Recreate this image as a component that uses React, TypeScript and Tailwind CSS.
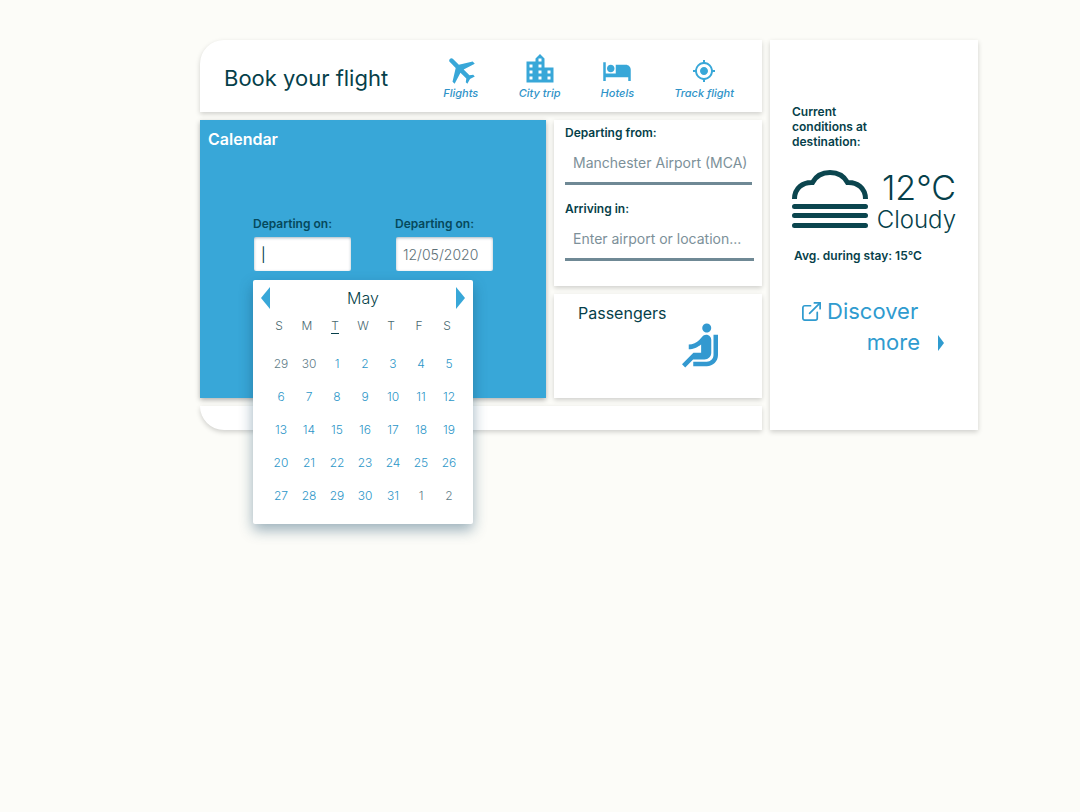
import React from "react";
import {
  MdFlight,
  MdLocationCity,
  MdHotel,
  MdGpsFixed,
  MdAirlineSeatReclineNormal,
} from "react-icons/md";
import { FiExternalLink } from "react-icons/fi";

const card = "bg-white shadow-[0_2px_5px_rgba(0,0,0,0.18)]";

const days = ["S", "M", "T", "W", "T", "F", "S"];
const weeks = [
  [29, 30, 1, 2, 3, 4, 5],
  [6, 7, 8, 9, 10, 11, 12],
  [13, 14, 15, 16, 17, 18, 19],
  [20, 21, 22, 23, 24, 25, 26],
  [27, 28, 29, 30, 31, 1, 2],
];

function isOutside(week: number, day: number) {
  return (week === 0 && day > 7) || (week === 4 && day < 7);
}

function NavItem({ icon, label }: { icon: React.ReactNode; label: string }) {
  return (
    <a href="#" className="flex flex-col items-center text-[#38a7d8]">
      <span className="flex h-8 items-center">{icon}</span>
      <span className="text-[11px] leading-4 font-medium italic whitespace-nowrap text-[#2f93c8]">{label}</span>
    </a>
  );
}

function DatePicker() {
  return (
    <div className="absolute top-[160px] left-[53px] z-10 h-[244px] w-[220px] rounded-xs bg-white shadow-[0_6px_14px_rgba(20,70,100,0.42)]">
      <div className="flex h-9 items-center justify-between px-2">
        <button type="button" aria-label="Previous month">
          <svg className="h-[22px] w-[9px] fill-[#38a7d8]" viewBox="0 0 9 22">
            <path d="M9 0v22L0 11z" />
          </svg>
        </button>
        <span className="text-base font-light text-[#063f4a]">May</span>
        <button type="button" aria-label="Next month">
          <svg className="h-[22px] w-[9px] fill-[#38a7d8]" viewBox="0 0 9 22">
            <path d="M0 0v22l9-11z" />
          </svg>
        </button>
      </div>
      <table className="ml-3 table-fixed border-collapse text-xs font-light">
        <thead>
          <tr className="h-5 text-[#47686f]">
            {days.map((d, i) => (
              <th key={i} className="w-7 p-0 text-center leading-4 font-light">
                <span className={i === 2 ? "border-b border-[#063f4a]" : ""}>{d}</span>
              </th>
            ))}
          </tr>
        </thead>
      </table>
      <table className="mt-[11px] ml-3.5 table-fixed border-collapse text-xs">
        <tbody>
          {weeks.map((week, w) => (
            <tr key={w} className="h-[33px]">
              {week.map((day, i) => (
                <td key={i} className="w-7 p-0 text-center">
                  <button
                    type="button"
                    className={
                      isOutside(w, day)
                        ? "font-light text-[#5f7d88]"
                        : "font-light text-[#2c96c8]"
                    }
                  >
                    {day}
                  </button>
                </td>
              ))}
            </tr>
          ))}
        </tbody>
      </table>
    </div>
  );
}

function DateField({ id, children }: { id: string; children: React.ReactNode }) {
  return (
    <div className="w-[98px]">
      <label htmlFor={id} className="block text-xs leading-4 font-semibold whitespace-nowrap text-[#06495c]">
        Departing on:
      </label>
      {children}
    </div>
  );
}

const dateInput =
  "mt-[5px] ml-px block h-[34px] w-[97px] rounded-xs bg-white px-[7px] text-sm shadow-[inset_0_1px_3px_rgba(0,50,80,0.35)] outline-none";

const placeInput =
  "block h-11 border-b-3 border-[#6f8995] pt-1.5 pb-1 pl-2 text-sm outline-none placeholder:text-[#7c9099]";

export default function App() {
  return (
    <div className="min-h-screen bg-[#fcfcf8] pt-10 pr-[102px] pl-[200px] font-['Inter',sans-serif] text-[#063f4a]">
      <div className="flex gap-2">
        <main className="flex min-w-0 flex-1 flex-col gap-2">
          <header className={`flex h-[72px] items-center rounded-tl-3xl pr-7 pl-6 ${card}`}>
            <h1 className="flex-1 pt-1 text-[22px] whitespace-nowrap">Book your flight</h1>
            <nav className="flex gap-10 pt-0.5">
              <NavItem icon={<MdFlight className="size-9 -rotate-45" />} label="Flights" />
              <NavItem icon={<MdLocationCity className="size-9" />} label="City trip" />
              <NavItem icon={<MdHotel className="mt-1 size-[30px]" />} label="Hotels" />
              <NavItem icon={<MdGpsFixed className="mt-1 size-6" />} label="Track flight" />
            </nav>
          </header>

          <div className="flex gap-2">
            <section className="relative min-w-0 flex-1 bg-[#38a7d8] shadow-[0_2px_5px_rgba(0,0,0,0.3)]">
              <h2 className="px-2 pt-[7px] text-base leading-6 font-semibold text-white">Calendar</h2>
              <div className="flex gap-11 pt-[65px] pl-[53px]">
                <DateField id="depart">
                  <input id="depart" placeholder="|" className={`${dateInput} placeholder:text-[#063f4a]`} />
                </DateField>
                <DateField id="return">
                  <input id="return" defaultValue="12/05/2020" className={`${dateInput} font-light text-[#5d7077]`} />
                </DateField>
              </div>
              <DatePicker />
            </section>

            <div className="flex w-[208px] flex-col gap-2">
              <section className={`h-[166px] pt-[5px] pr-2 pl-[11px] ${card}`}>
                <label htmlFor="from" className="block text-xs leading-4 font-semibold">
                  Departing from:
                </label>
                <input id="from" placeholder="Manchester Airport (MCA)" className={`w-[187px] ${placeInput}`} />
                <label htmlFor="to" className="mt-4 block text-xs leading-4 font-semibold">
                  Arriving in:
                </label>
                <input id="to" placeholder="Enter airport or location..." className={`w-full ${placeInput}`} />
              </section>
              <section className={`h-[104px] px-6 pt-[7px] ${card}`}>
                <h2 className="text-base leading-6">Passengers</h2>
                <MdAirlineSeatReclineNormal className="-mt-1.5 mr-[11px] ml-auto size-[54px] -scale-x-100 text-[#3399d0]" />
              </section>
            </div>
          </div>
          <footer className={`h-6 rounded-bl-3xl ${card}`} />
        </main>

        <aside className={`flex w-[208px] flex-col px-[22px] pt-16 ${card}`}>
          <p className="w-24 text-xs leading-[15px] font-semibold">
            Current conditions at destination:
          </p>
          <div className="mt-[21px] flex items-start justify-between">
            <svg className="h-[60px] w-[76px]" viewBox="0 0 76 60" fill="none" stroke="#0b454e">
              <path d="M2.500 29C2.500 18 11 12 20.500 12.500C24 6 30 2.500 38 2.500S52 6 55.500 12.500C65 12 73.500 18 73.500 29" strokeWidth="5" />
              <path d="M2.500 36.500h71M2.500 45.500h71M2.500 55.500h71" strokeWidth="5" strokeLinecap="round" />
            </svg>
            <div className="flex w-[86px] flex-col items-end whitespace-nowrap">
              <span className="text-[34px] leading-9 font-light">12°C</span>
              <span className="text-2xl leading-7 font-light">Cloudy</span>
            </div>
          </div>
          <p className="mt-3.5 pl-0.5 text-xs leading-4 font-semibold whitespace-nowrap">
            Avg. during stay: 15°C
          </p>
          <a href="#" className="mt-8 flex flex-col pl-2 text-[22px] leading-[31px] text-[#2f9bcf]">
            <span className="flex items-center gap-1">
              <FiExternalLink className="size-[23px]" strokeWidth={1.8} />
              Discover
            </span>
            <span className="flex items-center justify-end gap-[18px] pr-3">
              more
              <svg className="h-4 w-[6px] fill-current" viewBox="0 0 6 16">
                <path d="M0 0v16l6-8z" />
              </svg>
            </span>
          </a>
        </aside>
      </div>
    </div>
  );
}
